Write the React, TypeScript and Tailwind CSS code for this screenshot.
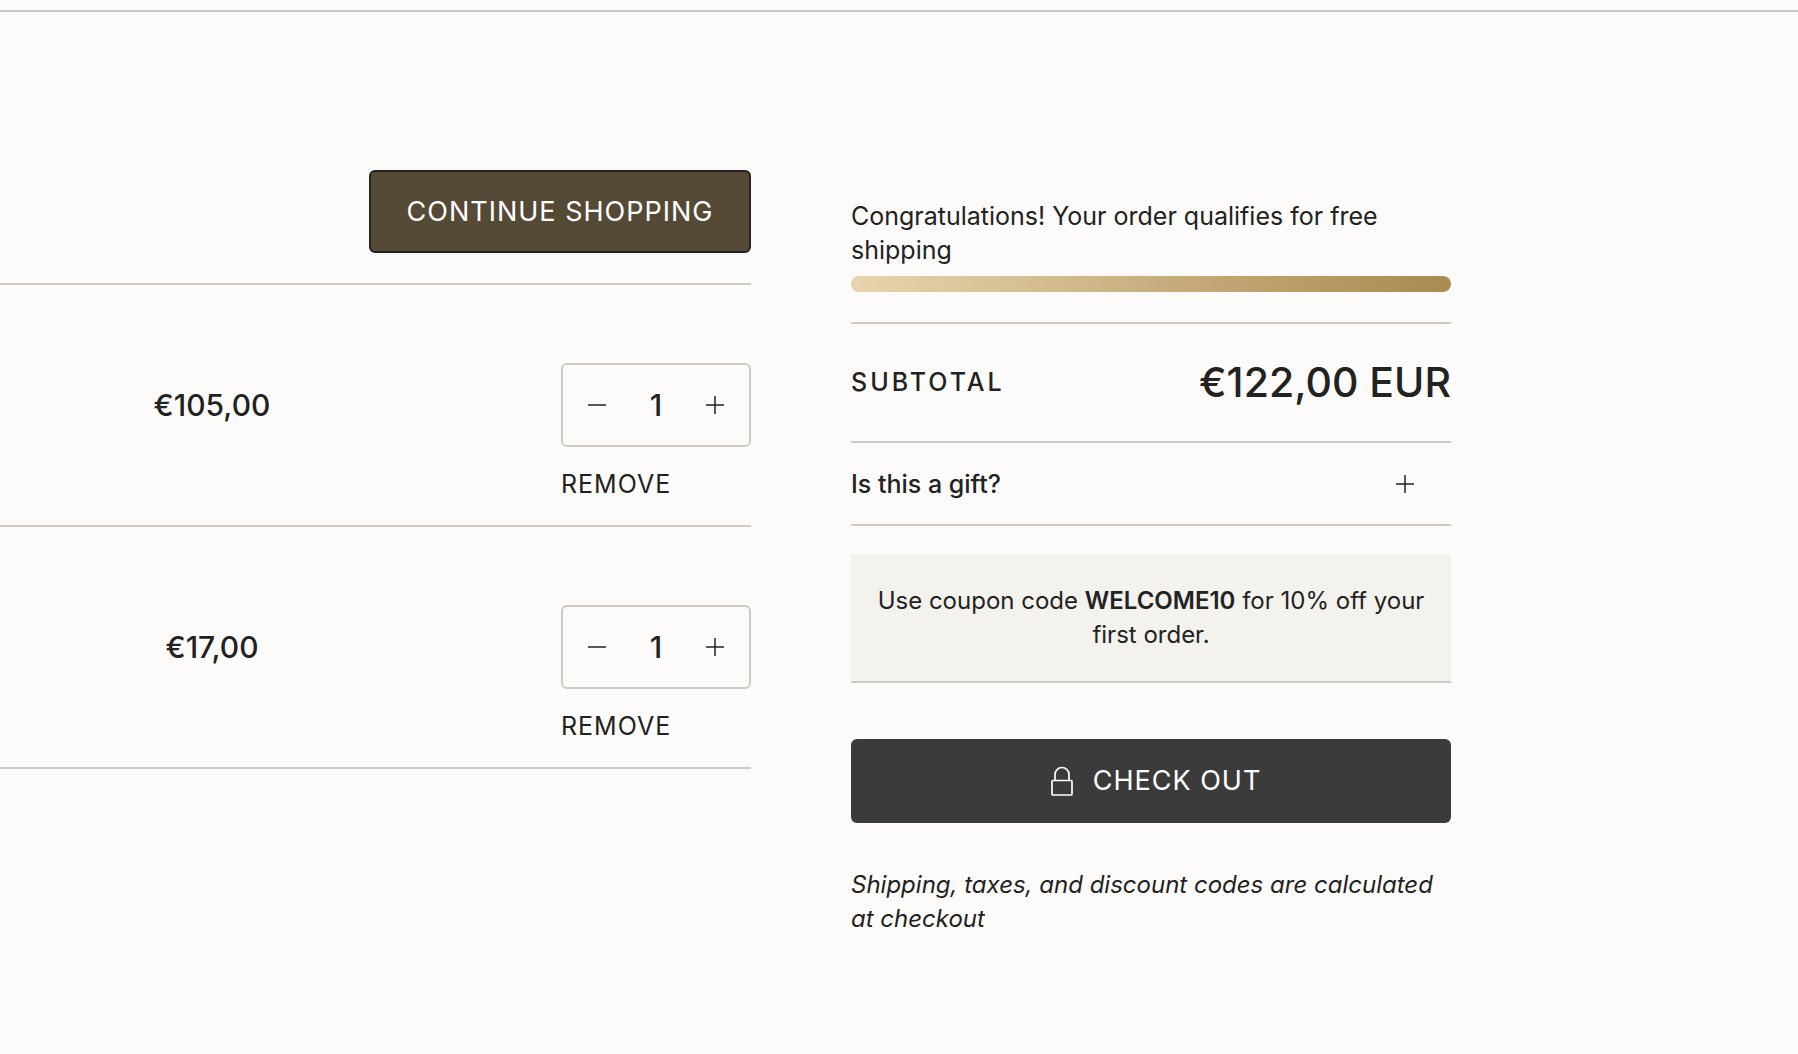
import React, { useState } from 'react';

interface CartItem {
  id: number;
  price: string;
  quantity: number;
}

const initialItems: CartItem[] = [
  { id: 1, price: '€105,00', quantity: 1 },
  { id: 2, price: '€17,00', quantity: 1 }
];

const MinusIcon = () => (
  <svg className="w-[18px] h-[18px]" viewBox="0 0 18 18" fill="none" stroke="currentColor" strokeWidth="1.5" aria-hidden="true">
    <path d="M0 9h18" />
  </svg>
);

const PlusIcon = () => (
  <svg className="w-[18px] h-[18px]" viewBox="0 0 18 18" fill="none" stroke="currentColor" strokeWidth="1.5" aria-hidden="true">
    <path d="M0 9h18M9 0v18" />
  </svg>
);

const LockIcon = () => (
  <svg className="w-[22px] h-[30px]" viewBox="0 0 22 30" fill="none" stroke="currentColor" strokeWidth="1.7" aria-hidden="true">
    <rect x="1" y="14.5" width="20" height="14.5" rx="1" />
    <path d="M4 14.5V8.5a7 7 0 0 1 14 0v6" />
  </svg>
);

interface QuantityProps {
  item: CartItem;
  onChange: (quantity: number) => void;
}

const Quantity: React.FC<QuantityProps> = ({ item, onChange }) => (
  <div className="flex w-[190px] h-[84px] border-2 border-[#d0cac3] rounded-md">
    <button
      type="button"
      className="w-[68px] flex items-center justify-center"
      aria-label="Decrease quantity"
      onClick={() => onChange(Math.max(1, item.quantity - 1))}
    >
      <MinusIcon />
    </button>
    <input
      className="flex-1 min-w-0 bg-transparent text-center text-[30px] font-medium outline-none"
      type="text"
      inputMode="numeric"
      aria-label="Quantity"
      value={item.quantity}
      onChange={(e) => onChange(Number(e.target.value) || 1)}
    />
    <button
      type="button"
      className="w-[68px] flex items-center justify-center"
      aria-label="Increase quantity"
      onClick={() => onChange(item.quantity + 1)}
    >
      <PlusIcon />
    </button>
  </div>
);

const CartSummary: React.FC = () => {
  const [giftOpen, setGiftOpen] = useState(false);

  return (
    <aside className="w-[600px] shrink-0 pt-[187px]">
      <p>Congratulations! Your order qualifies for free shipping</p>
      <div className="mt-[9px] h-4 rounded-full bg-linear-to-r from-[#e8d4ae] to-[#a98b50]" />

      <div className="mt-[30px] h-[121px] pb-[2px] border-y-2 border-[#d0cac3] flex items-center justify-between">
        <span className="font-medium tracking-[3px]">SUBTOTAL</span>
        <span className="text-[41px] font-medium">€122,00 EUR</span>
      </div>

      <div className="border-b-2 border-[#d0cac3]">
        <button
          type="button"
          className="w-full h-[81px] pr-[37px] flex items-center justify-between font-medium"
          aria-expanded={giftOpen}
          onClick={() => setGiftOpen(!giftOpen)}
        >
          Is this a gift?
          <PlusIcon />
        </button>
        {giftOpen && (
          <textarea className="w-full h-24 mb-6 p-3 border-2 border-[#d0cac3] rounded-md" aria-label="Gift message" />
        )}
      </div>

      <p className="mt-7 px-4 pt-[30px] pb-[29px] bg-[#f3f2ed] border-b-2 border-[#d0cac3] text-center text-[24px]">
        Use coupon code <strong className="font-semibold">WELCOME10</strong> for 10% off your first order.
      </p>

      <button
        type="submit"
        className="mt-14 w-full h-[84px] pl-[10px] rounded-md bg-[#3b3b3b] text-white text-[27px] tracking-[1px] flex items-center justify-center gap-5"
      >
        <LockIcon />
        CHECK OUT
      </button>

      <p className="mt-[45px] italic text-[24px]">Shipping, taxes, and discount codes are calculated at checkout</p>
    </aside>
  );
};

export default function App() {
  const [items, setItems] = useState<CartItem[]>(initialItems);

  const updateQuantity = (id: number, quantity: number) => {
    setItems(items.map((item) => (item.id === id ? { ...item, quantity } : item)));
  };

  const removeItem = (id: number) => {
    setItems(items.filter((item) => item.id !== id));
  };

  return (
    <div className="min-h-screen bg-[#fcfbf9] text-[#222222] font-['Inter',sans-serif] text-[25px] leading-[34px]">
      <header className="h-3 border-b-2 border-[#c8c7c5]" />

      <main className="flex gap-[100px] pr-[347px] pb-24">
        <section className="flex-1 pt-[158px]">
          <div className="flex justify-end pb-[30px] border-b-2 border-[#d0cac3]">
            <a
              href="#"
              className="w-[382px] h-[83px] flex items-center justify-center border-2 border-[#222222] rounded-md bg-[#554a36] text-white text-[27px] tracking-[1px]"
            >
              CONTINUE SHOPPING
            </a>
          </div>

          <table className="w-full table-fixed border-collapse">
            <tbody>
              {items.map((item) => (
                <tr key={item.id}>
                  <td className="w-[424px] pt-[78px] align-top text-center text-[30px] leading-[84px] font-medium border-b-2 border-[#d0cac3]">
                    {item.price}
                  </td>
                  <td className="pt-[78px] pb-6 border-b-2 border-[#d0cac3]">
                    <div className="w-[190px] ml-auto">
                      <Quantity item={item} onChange={(quantity) => updateQuantity(item.id, quantity)} />
                      <button
                        type="button"
                        className="block mt-5 text-[25px] tracking-[1px]"
                        onClick={() => removeItem(item.id)}
                      >
                        REMOVE
                      </button>
                    </div>
                  </td>
                </tr>
              ))}
            </tbody>
          </table>
        </section>

        <CartSummary />
      </main>
    </div>
  );
}
